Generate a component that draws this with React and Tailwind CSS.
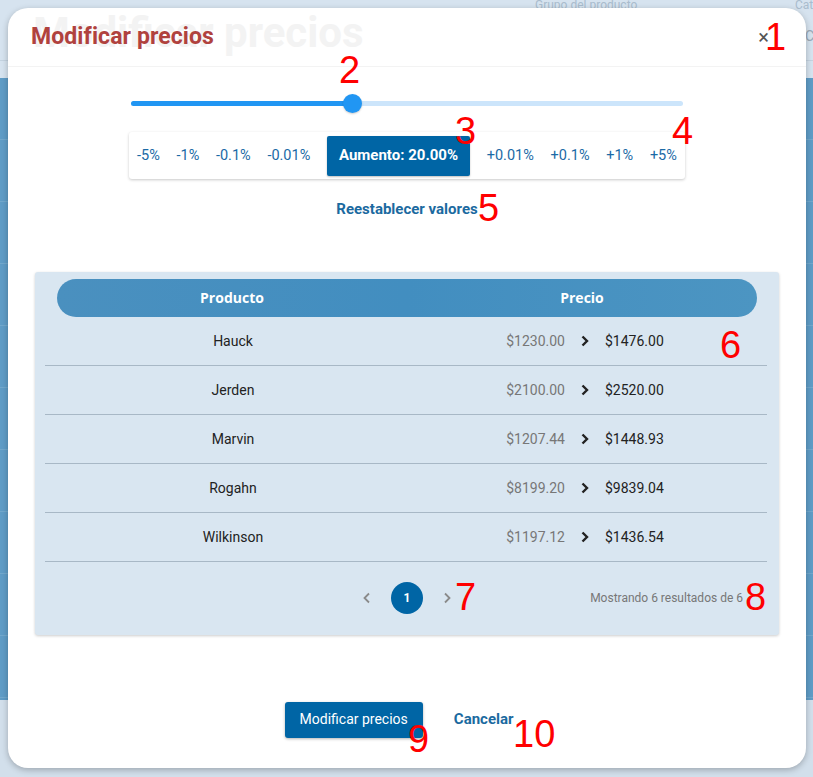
import { useState } from 'react';

const steps = ['-5%', '-1%', '-0.1%', '-0.01%', null, '+0.01%', '+0.1%', '+1%', '+5%'];

const rows = [
    { name: 'Hauck', old: '$1230.00', now: '$1476.00' },
    { name: 'Jerden', old: '$2100.00', now: '$2520.00' },
    { name: 'Marvin', old: '$1207.44', now: '$1448.93' },
    { name: 'Rogahn', old: '$8199.20', now: '$9839.04' },
    { name: 'Wilkinson', old: '$1197.12', now: '$1436.54' },
    { name: 'Zulauf', old: '$1500.00', now: '$1800.00' },
];

const marks = [
    { n: '1', cls: 'left-[765px] top-[18px]' },
    { n: '2', cls: 'left-[339px] top-[51px]' },
    { n: '3', cls: 'left-[455px] top-[112px]' },
    { n: '4', cls: 'left-[672px] top-[112px]' },
    { n: '5', cls: 'left-[478px] top-[189px]' },
    { n: '6', cls: 'left-[720px] top-[326px]' },
    { n: '7', cls: 'left-[455px] top-[578px]' },
    { n: '8', cls: 'left-[745px] top-[578px]' },
    { n: '9', cls: 'left-[408px] top-[720px]' },
    { n: '10', cls: 'left-[513px] top-[715px]' },
];

function Chevron({ left, className }) {
    return (
        <svg width="10" height="12" viewBox="0 0 10 12" className={className}>
            <path d={left ? 'M7 1.5 L2.5 6 L7 10.5' : 'M3 1.5 L7.5 6 L3 10.5'} fill="none" stroke="currentColor" strokeWidth="1.8" />
        </svg>
    );
}

export default function App() {
    const [pct] = useState(40);

    return (
        <div className="relative w-[813px] h-[777px] overflow-hidden bg-[#d6e3ef] font-['Roboto',sans-serif]">
            {/* page behind the modal */}
            <div className="flex flex-col h-full">
                <div className="h-[60px] relative text-[12px] text-[#a9bccd]">
                    <span className="absolute left-[535px] top-[-4px]">Grupo del producto</span>
                    <span className="absolute left-[795px] top-[-4px]">Cat</span>
                    <span className="absolute left-[805px] top-[26px] text-[14px] text-[#9aa9b7]">C</span>
                </div>
                <div className="h-[18px] border-t border-[#c4d3e0]" />
                <div className="h-[622px] bg-[#5f9cc6] flex flex-col">
                    {[0, 1, 2, 3, 4, 5, 6, 7, 8, 9].map(i => (
                        <div key={i} className="h-[62px] border-b border-[#72a8cc]" />
                    ))}
                </div>
                <div className="flex-1 bg-[#d2dfeb]" />
            </div>

            {/* modal */}
            <div className="absolute left-[8px] top-[8px] w-[798px] h-[760px] bg-white rounded-[20px] shadow-[0_2px_6px_rgba(0,0,0,0.25)] flex flex-col">
                <div className="absolute left-[25px] top-[-4px] text-[42px] font-bold text-[#f3f3f3] leading-[58px] select-none">Modificar precios</div>

                <div className="relative h-[59px] flex items-center justify-between pl-[23px] pr-[37px] border-b border-[#f3f3f3]">
                    <h2 className="text-[23px] font-bold text-[#b0423e] tracking-[0.1px]">Modificar precios</h2>
                    <button className="text-[20px] text-[#555] leading-none">×</button>
                </div>

                <div className="flex flex-col items-center">
                    <div className="relative w-[552px] h-[18px] mt-[27px] flex items-center">
                        <div className="w-full h-[5px] rounded-full bg-[#cce5fb]" />
                        <div className="absolute left-0 h-[5px] rounded-full bg-[#2196f3]" style={{ width: `${pct}%` }} />
                        <div className="absolute w-[19px] h-[19px] -ml-[9px] rounded-full bg-[#2196f3] shadow-[0_1px_2px_rgba(0,0,0,0.2)]" style={{ left: `${pct}%` }} />
                    </div>

                    <div className="w-[556px] h-[47px] mt-[20px] flex items-center justify-between px-[8px] bg-white rounded-[3px] shadow-[0_1px_3px_rgba(0,0,0,0.22)] text-[14.5px] text-[#1b6aa6]">
                        {steps.map((s, i) =>
                            s ? (
                                <span key={i}>{s}</span>
                            ) : (
                                <span key={i} className="h-[40px] px-[12px] flex items-center bg-[#0065a5] text-white text-[15px] font-bold rounded-[2px] shadow-[0_1px_2px_rgba(0,0,0,0.25)]">Aumento: 20.00%</span>
                            )
                        )}
                    </div>

                    <button className="mt-[19px] text-[15px] font-bold text-[#1b6aa0]">Reestablecer valores</button>
                </div>

                <div className="mx-[27px] mt-[51px] bg-[#d9e6f1] rounded-[3px] shadow-[0_1px_3px_rgba(0,0,0,0.2)] pt-[7px]">
                    <div className="mx-[22px] h-[38px] rounded-full bg-gradient-to-r from-[#4a90bf] via-[#428ec0] to-[#4c95c2] grid grid-cols-2 items-center text-white font-['Open_Sans',sans-serif] font-bold text-[14px]">
                        <span className="text-center">Producto</span>
                        <span className="text-center">Precio</span>
                    </div>

                    <div className="ml-[10px] mr-[12px] h-[245px] overflow-y-auto [&::-webkit-scrollbar]:w-[5px] [&::-webkit-scrollbar-thumb]:bg-[#bdbdbd] [&::-webkit-scrollbar-track]:bg-transparent">
                        {rows.map(r => (
                            <div key={r.name} className="h-[49px] border-b border-[#a8b8c6] grid grid-cols-2 items-center pl-[12px] pr-[6px] pt-[1px] text-[14px]">
                                <span className="text-center text-[#222]">{r.name}</span>
                                <span className="flex items-center justify-center gap-[16px]">
                                    <span className="text-[#777]">{r.old}</span>
                                    <svg width="8" height="12" viewBox="0 0 8 12" className="text-[#222]">
                                        <path d="M1.5 1.5 L6 6 L1.5 10.5" fill="none" stroke="currentColor" strokeWidth="2.4" />
                                    </svg>
                                    <span className="text-[#222]">{r.now}</span>
                                </span>
                            </div>
                        ))}
                    </div>

                    <div className="h-[73px] grid grid-cols-[1fr_auto_1fr] items-center">
                        <span />
                        <div className="flex items-center gap-[19px] text-[#8a8a8a]">
                            <Chevron left />
                            <span className="w-[32px] h-[32px] rounded-full bg-[#0065a5] text-white text-[12px] font-bold flex items-center justify-center">1</span>
                            <Chevron />
                        </div>
                        <span className="justify-self-end pr-[36px] text-[12px] text-[#777]">Mostrando 6 resultados de 6</span>
                    </div>
                </div>

                <div className="mt-[67px] flex items-center justify-center gap-[31px] pr-[16px]">
                    <button className="h-[36px] px-[15px] bg-[#0065a5] text-white text-[14px] rounded-[3px] shadow-[0_1px_3px_rgba(0,0,0,0.3)]">Modificar precios</button>
                    <button className="text-[15px] font-bold text-[#1b6aa0]">Cancelar</button>
                </div>
            </div>

            {/* numbered annotations */}
            {marks.map(m => (
                <span key={m.n} className={`absolute ${m.cls} text-[#ff0000] text-[38px] leading-none font-['Liberation_Sans',sans-serif]`}>{m.n}</span>
            ))}
        </div>
    );
}
